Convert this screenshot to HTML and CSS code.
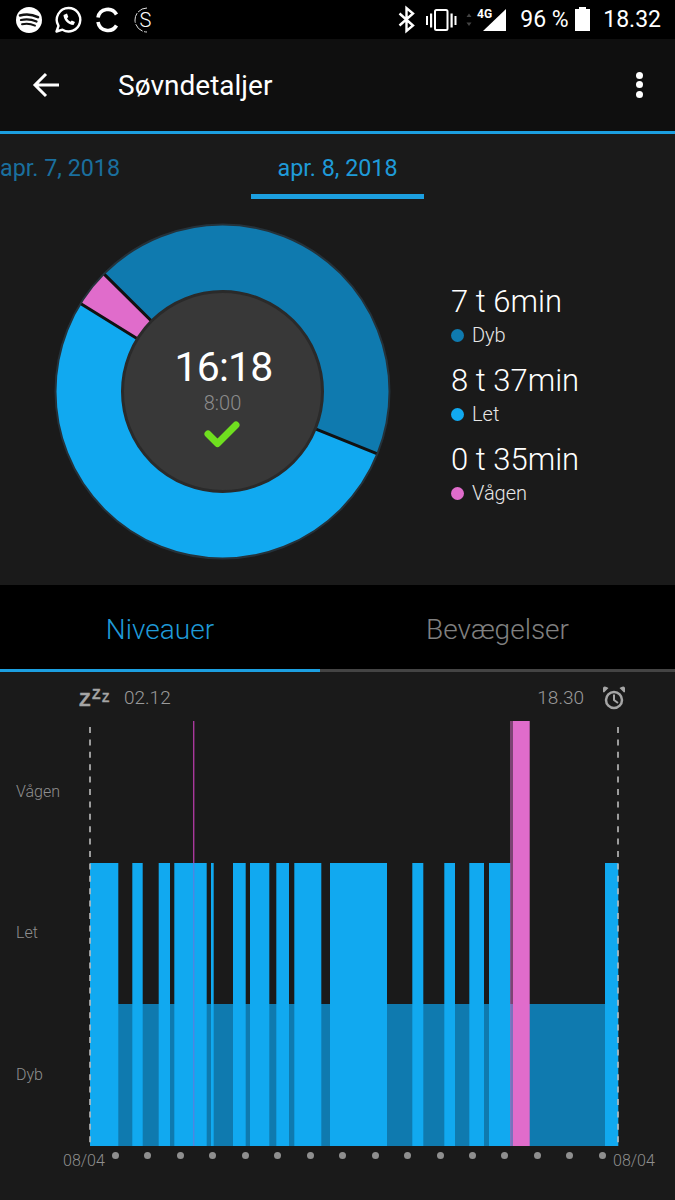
FILE: index.html
```html
<!DOCTYPE html>
<html lang="da">
<head>
<meta charset="utf-8">
<title>Søvndetaljer</title>
<link rel="stylesheet" href="styles.css">
</head>
<body>
<div class="page">
  <header class="status">
    <svg class="status-left" viewBox="0 0 165 39" width="165" height="39">
      <circle cx="29" cy="20" r="13" fill="#fff"/>
      <g fill="none" stroke="#111" stroke-linecap="round">
        <path d="M20 15.500c6-1.600 12.500-1 18 1.700" stroke-width="2.600"/>
        <path d="M21 20c5-1.200 10.500-.8 15.500 1.600" stroke-width="2.200"/>
        <path d="M22 24.300c4.300-1 8.800-.6 13 1.400" stroke-width="1.900"/>
      </g>
      <path d="M68.500 8a11.700 11.700 0 0 0-10 17.800L56.500 31.500l6-1.800A11.700 11.700 0 1 0 68.500 8z" fill="none" stroke="#fff" stroke-width="2.400" stroke-linejoin="round"/>
      <path d="M63.500 15c0 5 4.500 9.500 10 10l1.500-3-3.200-1.500-1.300 1.300c-1.500-.7-2.800-2-3.500-3.500l1.300-1.300L67 13.500z" fill="#fff"/>
      <g fill="none" stroke="#fff" stroke-width="3.600">
        <path d="M98 17.500a10 10 0 0 1 18.500-3"/>
        <path d="M98 22a10 10 0 0 0 18.500 3.500"/>
      </g>
      <path d="M147 8a12 12 0 0 0 0 24" fill="none" stroke="#ddd" stroke-width="1" stroke-dasharray="10 1.500"/>
      <text x="139.500" y="27" class="s-mark">S</text>
    </svg>
    <div class="status-right">
      <svg viewBox="395 0 115 39" width="115" height="39">
        <path d="M400.500 13.500l13.500 12-6.500 5.500V8l6.500 5.500-13.500 12" fill="none" stroke="#fff" stroke-width="2.400"/>
        <rect x="436" y="10" width="12.500" height="20" rx="1.500" fill="none" stroke="#fff" stroke-width="2"/>
        <rect x="427" y="16" width="2" height="9" fill="#fff"/>
        <rect x="431" y="13.500" width="2.200" height="14" fill="#fff"/>
        <rect x="451.500" y="13.500" width="2.200" height="14" fill="#fff"/>
        <rect x="455.500" y="16" width="2" height="9" fill="#fff"/>
        <path d="M467.500 17l2.500-3.500 2.500 3.500zM467.500 22.500l2.500 3.500 2.500-3.500z" fill="#444"/>
        <text x="478" y="18" class="net">4G</text>
        <path d="M484 31l23-22v22z" fill="#fff"/>
      </svg>
      <span class="pct">96 %</span>
      <svg class="batt" viewBox="0 0 15 24" width="15" height="24">
        <path d="M4 0h7v2h4v22H0V2h4z" fill="#fff"/>
      </svg>
      <span class="clock">18.32</span>
    </div>
  </header>

  <nav class="toolbar">
    <svg class="back" viewBox="0 0 28 28" width="28" height="28">
      <path d="M27 14H4M14 3L3 14l11 11" fill="none" stroke="#fff" stroke-width="3"/>
    </svg>
    <h1 class="title">Søvndetaljer</h1>
    <div class="more"><i></i><i></i><i></i></div>
  </nav>

  <section class="dates">
    <span class="date">apr. 7, 2018</span>
    <span class="date date-on">apr. 8, 2018</span>
  </section>

  <section class="summary">
    <div class="donut">
      <svg viewBox="52 221 340 340" width="340" height="340">
        <path d="M222.500 391.500L377.400 453.800A167 167 0 1 1 80.500 303.500z" fill="#11a9f0"/>
        <path d="M222.500 391.500L80.500 303.500A167 167 0 0 1 103.900 273.900z" fill="#e06ccb"/>
        <path d="M222.500 391.500L103.900 273.900A167 167 0 0 1 377.400 453.800z" fill="#0f7aaf"/>
        <path d="M222.500 391.500L377.400 453.800M222.500 391.500L80.500 303.500M222.500 391.500L103.900 273.900" stroke="#111" stroke-width="3"/>
        <circle cx="222.500" cy="391.500" r="167" fill="none" stroke="#25323a" stroke-width="2"/>
        <circle cx="222.500" cy="391.500" r="100" fill="#383838" stroke="#2a2a2a" stroke-width="3"/>
      </svg>
      <div class="donut-center">
        <span class="big-time">16:18</span>
        <span class="goal">8:00</span>
        <svg class="check" viewBox="0 0 40 32" width="40" height="32">
          <path d="M6 16l9.500 9.500L34 7" fill="none" stroke="#6fdf1f" stroke-width="7" stroke-linecap="round" stroke-linejoin="round"/>
        </svg>
      </div>
    </div>
    <ul class="stats">
      <li class="stat">
        <span class="stat-value">7 t 6min</span>
        <span class="stat-label"><i class="dot dot-deep"></i>Dyb</span>
      </li>
      <li class="stat">
        <span class="stat-value">8 t 37min</span>
        <span class="stat-label"><i class="dot dot-light"></i>Let</span>
      </li>
      <li class="stat">
        <span class="stat-value">0 t 35min</span>
        <span class="stat-label"><i class="dot dot-awake"></i>Vågen</span>
      </li>
    </ul>
  </section>

  <section class="tabs">
    <div class="tab tab-on">Niveauer</div>
    <div class="tab">Bevægelser</div>
  </section>

  <section class="chart">
    <div class="chart-head">
      <span class="zzz"><b class="z1">Z</b><b class="z2">Z</b><b class="z3">Z</b></span>
      <span class="head-time">02.12</span>
      <span class="head-time head-end">18.30</span>
      <svg class="alarm" viewBox="0 0 22 24" width="22" height="24">
        <circle cx="11" cy="14" r="8" fill="none" stroke="#a5a5a5" stroke-width="2.500"/>
        <path d="M11 8.500V14l4 3" fill="none" stroke="#a5a5a5" stroke-width="2"/>
        <path d="M1 6.500L5.500 2 3.500 1A3 3 0 0 0 1 6.500zM21 6.500L16.500 2l2-1A3 3 0 0 1 21 6.500z" fill="#a5a5a5"/>
      </svg>
    </div>
    <div class="plot-row">
      <div class="y-labels">
        <span>Vågen</span>
        <span>Let</span>
        <span>Dyb</span>
      </div>
      <svg class="plot" viewBox="84 721 540 425" width="540" height="425">
        <rect x="118" y="1004" width="487" height="142" fill="#0f7aaf"/>
        <g fill="#11a9f0">
          <rect x="90" y="863" width="28.300" height="283"/>
          <rect x="132.300" y="863" width="10.400" height="283"/>
          <rect x="158.700" y="863" width="11.300" height="283"/>
          <rect x="174.300" y="863" width="32.400" height="283"/>
          <rect x="211" y="863" width="2.700" height="283"/>
          <rect x="233" y="863" width="12.700" height="283"/>
          <rect x="250" y="863" width="19.300" height="283"/>
          <rect x="276.300" y="863" width="12.700" height="283"/>
          <rect x="294.300" y="863" width="27" height="283"/>
          <rect x="330" y="863" width="57" height="283"/>
          <rect x="412.300" y="863" width="11" height="283"/>
          <rect x="444.300" y="863" width="10.700" height="283"/>
          <rect x="469.300" y="863" width="14.700" height="283"/>
          <rect x="489" y="863" width="21.300" height="283"/>
          <rect x="605" y="863" width="13.300" height="283"/>
        </g>
        <rect x="193" y="721" width="1.400" height="142" fill="#a8389c"/>
        <rect x="193" y="863" width="1.400" height="283" fill="#4f86e0"/>
        <rect x="510" y="721" width="3" height="425" fill="#e06ccb" fill-opacity=".5"/>
        <rect x="513" y="721" width="16.700" height="425" fill="#e06ccb"/>
        <path d="M90 727V1146M618 727V1146" stroke="#bdbdbd" stroke-opacity=".8" stroke-width="2" stroke-dasharray="6 6.400"/>
      </svg>
    </div>
    <div class="axis">
      <span class="axis-label">08/04</span>
      <div class="ticks">
        <i></i><i></i><i></i><i></i><i></i><i></i><i></i><i></i><i></i><i></i><i></i><i></i><i></i><i></i><i></i><i></i>
      </div>
      <span class="axis-label axis-end">08/04</span>
    </div>
  </section>
</div>
</body>
</html>
```
FILE: styles.css
```css
* { box-sizing: border-box; }
html, body { margin: 0; padding: 0; background: #1a1a1a; }
body { font-family: Roboto, "Liberation Sans", sans-serif; color: #fff; }
.page { width: 675px; height: 1200px; overflow: hidden; display: flex; flex-direction: column; }

.status { height: 39px; background: #000; display: flex; align-items: center; flex: none; }
.status svg { display: block; }
.s-mark { font: 300 20px Roboto, sans-serif; fill: #fff; }
.net { font: 700 12px Roboto, sans-serif; fill: #fff; }
.status-right { margin-left: auto; display: flex; align-items: center; padding-right: 14px; }
.pct { margin-left: 11px; font-size: 23px; width: 48px; white-space: nowrap; }
.batt { margin-left: 7px; margin-top: -1px; }
.clock { margin-left: 13px; font-size: 23px; }

.toolbar { height: 95px; flex: none; background: #0f0f0f; border-bottom: 3px solid #1c9fe0; display: flex; align-items: center; padding: 0 32px 0 32px; }
.back { display: block; margin-top: -1px; }
.title { margin: 1px 0 0 58px; font-size: 28px; font-weight: 400; }
.more { margin-left: auto; display: flex; flex-direction: column; gap: 2.500px; margin-top: -1px; }
.more i { display: block; width: 7px; height: 7px; border-radius: 50%; background: #fff; }

.dates { height: 65px; flex: none; display: flex; padding-left: 0; }
.date { font-size: 23.300px; color: #1a6f9e; padding-top: 20px; white-space: nowrap; width: 251px; }
.date-on { color: #1f9ad8; width: 173px; text-align: center; border-bottom: 5px solid #1c9fe0; }

.summary { height: 386px; flex: none; display: flex; padding: 22px 0 0 52px; }
.donut { position: relative; width: 340px; height: 340px; flex: none; }
.donut > svg { display: block; }
.donut-center { position: absolute; inset: 0; display: flex; flex-direction: column; align-items: center; padding-top: 119px; }
.big-time { font-size: 41px; line-height: 54px; font-weight: 400; letter-spacing: -.8px; margin-left: 3px; }
.goal { font-size: 20px; line-height: 24px; font-weight: 300; color: #8c8c8c; margin: -3px 0 0 1px; }
.check { display: block; margin-top: 3px; }

.stats { list-style: none; margin: 0; padding: 61px 0 0 59px; }
.stat { display: flex; flex-direction: column; height: 79px; }
.stat-value { font-size: 31px; font-weight: 300; line-height: 40px; white-space: nowrap; }
.stat-label { display: flex; align-items: center; font-size: 20px; font-weight: 300; line-height: 26px; color: #e6e6e6; }
.dot { width: 13px; height: 13px; border-radius: 50%; margin-right: 8px; flex: none; }
.dot-deep { background: #0f7aaf; }
.dot-light { background: #11a9f0; }
.dot-awake { background: #e06ccb; }

.tabs { height: 87px; flex: none; background: #000; display: flex; }
.tab { flex: 1 1 355px; text-align: center; font-size: 28px; font-weight: 300; line-height: 90px; color: #808080; border-bottom: 3px solid #444; }
.tab-on { flex: 0 0 320px; color: #1f9ad8; border-bottom-color: #1c9fe0; }

.chart { flex: 1; display: flex; flex-direction: column; }
.chart-head { height: 49px; flex: none; display: flex; align-items: center; padding: 2px 50px 0 79px; color: #9a9a9a; font-size: 19px; font-weight: 300; }
.zzz { width: 45px; height: 22px; display: flex; align-items: flex-start; color: #a5a5a5; line-height: 1; font-family: "Liberation Sans", sans-serif; -webkit-text-stroke: .3px #a5a5a5; }
.zzz b { display: block; font-weight: 700; }
.z1 { font-size: 19px; padding-top: 3px; width: 13px; }
.z2 { font-size: 14px; padding-top: 0; width: 10px; }
.z3 { font-size: 12px; padding-top: 5px; }
.head-end { margin-left: auto; }
.alarm { display: block; margin: 0 0 0 19px; flex: none; }

.plot-row { height: 425px; flex: none; display: flex; }
.y-labels { width: 84px; flex: none; display: flex; flex-direction: column; padding: 0 0 1px 16px; }
.y-labels span { flex: 1; display: flex; align-items: center; font-size: 16px; font-weight: 300; color: #8f8f8f; }
.plot { display: block; flex: none; }

.axis { display: grid; grid-template-columns: 112px 494px 1fr; flex: none; }
.axis-label { font-size: 16px; font-weight: 300; color: #8f8f8f; padding: 5px 0 0 63px; white-space: nowrap; }
.axis-end { padding-left: 7px; }
.ticks { display: flex; justify-content: space-between; padding-top: 6px; }
.ticks i { display: block; width: 7px; height: 7px; border-radius: 50%; background: #8f8f8f; }
```
